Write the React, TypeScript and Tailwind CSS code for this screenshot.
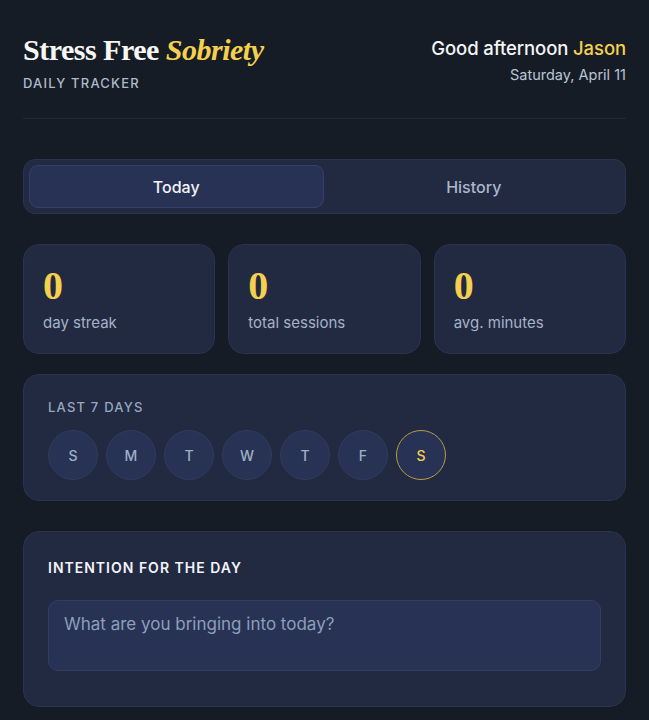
const days = ["S", "M", "T", "W", "T", "F", "S"];

const stats = [
    { value: "0", label: "day streak" },
    { value: "0", label: "total sessions" },
    { value: "0", label: "avg. minutes" },
];

const serif = "font-['Liberation_Serif','DejaVu_Serif',serif]";

export default function App() {
    return (
        <div className="min-h-[720px] bg-[#161c25] px-[23px] font-['Inter','Noto_Sans',sans-serif] text-[#c5d0e0]">
            <header className="flex items-start justify-between border-b border-[#232a37] pt-[32px] pb-[27px]">
                <div>
                    <h1 className={`${serif} text-[30px] leading-[36px] font-bold tracking-[-0.5px] text-[#f7f7f5]`}>
                        Stress Free <span className="italic text-[#f4d04e]">Sobriety</span>
                    </h1>
                    <p className="mt-[7px] text-[13px] leading-[16px] font-medium tracking-[1.2px] text-[#aebacb]">
                        DAILY TRACKER
                    </p>
                </div>
                <div className="pt-[4px] text-right">
                    <p className="text-[18.5px] leading-[24px] font-medium tracking-[-0.1px] text-[#f4f5f7]">
                        Good afternoon <span className="text-[#f4d04e]">Jason</span>
                    </p>
                    <p className="mt-[6px] text-[14.5px] leading-[18px] text-[#b9c4d4]">Saturday, April 11</p>
                </div>
            </header>

            <div className="mt-[40px] flex gap-[4px] rounded-[12px] border border-[#2a3350] bg-[#222a42] p-[5px]">
                <button className="h-[43px] flex-1 rounded-[9px] border border-[#35406a] bg-[#283254] text-[16px] font-medium text-[#f2f4f8]">
                    Today
                </button>
                <button className="h-[43px] flex-1 rounded-[9px] text-[16px] font-medium text-[#a9b8cd]">
                    History
                </button>
            </div>

            <div className="mt-[30px] grid grid-cols-3 gap-[13px]">
                {stats.map((s) => (
                    <div
                        key={s.label}
                        className="h-[110px] rounded-[16px] border border-[#2a3350] bg-[#222a42] px-[19px] pt-[19px]"
                    >
                        <div className={`${serif} text-[40px] leading-[44px] font-bold text-[#f4d04e]`}>{s.value}</div>
                        <div className="mt-[5px] text-[15px] leading-[20px] text-[#a4b3c8]">{s.label}</div>
                    </div>
                ))}
            </div>

            <div className="mt-[20px] rounded-[16px] border border-[#2a3350] bg-[#222a42] px-[24px] pt-[24px] pb-[20px]">
                <p className="text-[13px] leading-[16px] font-medium tracking-[1.2px] text-[#97a8bf]">LAST 7 DAYS</p>
                <div className="mt-[15px] flex gap-[8px]">
                    {days.map((d, i) => {
                        const today = i === days.length - 1;
                        return (
                            <div
                                key={i}
                                className={`flex h-[50px] w-[50px] items-center justify-center rounded-full border bg-[#283254] text-[14px] font-medium ${
                                    today ? "border-[#b59d48] text-[#f4d04e]" : "border-[#313b5c] text-[#9fb0c6]"
                                }`}
                            >
                                {d}
                            </div>
                        );
                    })}
                </div>
            </div>

            <div className="mt-[30px] rounded-[16px] border border-[#2a3350] bg-[#222a42] px-[24px] pt-[27px] pb-[35px]">
                <p className="text-[14px] leading-[18px] font-semibold tracking-[1px] text-[#f2f4f8]">
                    INTENTION FOR THE DAY
                </p>
                <textarea
                    placeholder="What are you bringing into today?"
                    className="mt-[23px] block h-[71px] w-full resize-none rounded-[10px] border border-[#333e62] bg-[#283254] px-[15px] py-[11px] text-[17px] leading-[24px] text-[#e4e9f0] outline-none placeholder:text-[#8d9fbb]"
                />
            </div>
        </div>
    );
}
